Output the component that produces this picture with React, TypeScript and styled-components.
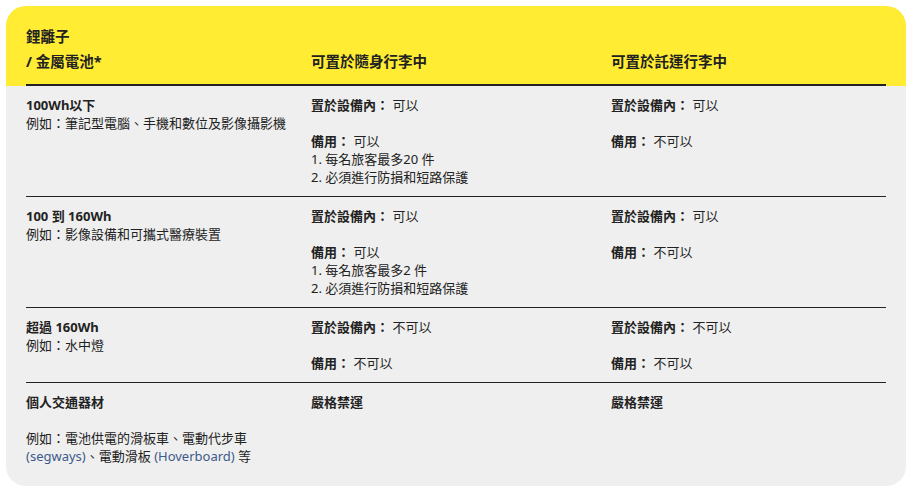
import React from 'react'
import styled, { createGlobalStyle } from 'styled-components'

const GlobalStyle = createGlobalStyle`
  html, body {
    margin: 0;
    padding: 0;
    background: #ffffff;
  }
  body {
    font-family: "Noto Sans", "Noto Sans CJK TC", sans-serif;
    color: #222222;
  }
`

const Page = styled.div`
  padding: 6px 7px 11px 6px;
`

const Card = styled.div`
  background: #efefef;
  border-radius: 20px;
  overflow: hidden;
`

const Header = styled.div`
  background: #ffec33;
  padding: 18px 20px 0 20px;
`

const HeaderGrid = styled.div`
  display: grid;
  grid-template-columns: 285px 300px 1fr;
  align-items: end;
  border-bottom: 2px solid #222222;
  padding-bottom: 10px;
`

const HeadCell = styled.div`
  font-size: 14.5px;
  font-weight: 700;
  line-height: 25px;
`

const Body = styled.div`
  padding: 0 20px 21px 20px;
`

const Row = styled.div<{ $last?: boolean }>`
  display: grid;
  grid-template-columns: 285px 300px 1fr;
  padding: 10px 0 ${p => (p.$last ? '0' : '10px')} 0;
  border-bottom: ${p => (p.$last ? 'none' : '1px solid #222222')};
`

const Cell = styled.div`
  font-size: 13px;
  line-height: 18px;
`

const Para = styled.p`
  margin: 0 0 18px 0;
  &:last-child {
    margin-bottom: 0;
  }
`

const Strong = styled.span`
  font-weight: 700;
`

const Latin = styled.span`
  color: #3d5a8a;
`

type Status = { label: string; value?: string; notes?: string[] }

const StatusBlock = ({ items }: { items: Status[] }) => (
  <Cell>
    {items.map((it, i) => (
      <Para key={i}>
        <Strong>{it.label}</Strong>
        {it.value ? ` ${it.value}` : ''}
        {it.notes?.map((n, j) => (
          <React.Fragment key={j}>
            <br />
            {n}
          </React.Fragment>
        ))}
      </Para>
    ))}
  </Cell>
)

export default function App() {
  return (
    <>
      <GlobalStyle />
      <Page>
        <Card>
          <Header>
            <HeaderGrid>
              <HeadCell>
                鋰離子
                <br />/ 金屬電池*
              </HeadCell>
              <HeadCell>可置於隨身行李中</HeadCell>
              <HeadCell>可置於託運行李中</HeadCell>
            </HeaderGrid>
          </Header>
          <Body>
            <Row>
              <Cell>
                <Strong>100Wh以下</Strong>
                <br />
                例如：筆記型電腦、手機和數位及影像攝影機
              </Cell>
              <StatusBlock
                items={[
                  { label: '置於設備內：', value: '可以' },
                  {
                    label: '備用：',
                    value: '可以',
                    notes: ['1. 每名旅客最多20 件', '2. 必須進行防損和短路保護'],
                  },
                ]}
              />
              <StatusBlock
                items={[
                  { label: '置於設備內：', value: '可以' },
                  { label: '備用：', value: '不可以' },
                ]}
              />
            </Row>
            <Row>
              <Cell>
                <Strong>100 到 160Wh</Strong>
                <br />
                例如：影像設備和可攜式醫療裝置
              </Cell>
              <StatusBlock
                items={[
                  { label: '置於設備內：', value: '可以' },
                  {
                    label: '備用：',
                    value: '可以',
                    notes: ['1. 每名旅客最多2 件', '2. 必須進行防損和短路保護'],
                  },
                ]}
              />
              <StatusBlock
                items={[
                  { label: '置於設備內：', value: '可以' },
                  { label: '備用：', value: '不可以' },
                ]}
              />
            </Row>
            <Row>
              <Cell>
                <Strong>超過 160Wh</Strong>
                <br />
                例如：水中燈
              </Cell>
              <StatusBlock
                items={[
                  { label: '置於設備內：', value: '不可以' },
                  { label: '備用：', value: '不可以' },
                ]}
              />
              <StatusBlock
                items={[
                  { label: '置於設備內：', value: '不可以' },
                  { label: '備用：', value: '不可以' },
                ]}
              />
            </Row>
            <Row $last>
              <Cell>
                <Para>
                  <Strong>個人交通器材</Strong>
                </Para>
                <Para>
                  例如：電池供電的滑板車、電動代步車
                  <br />
                  <Latin>(segways)</Latin>、電動滑板 <Latin>(Hoverboard)</Latin> 等
                </Para>
              </Cell>
              <StatusBlock items={[{ label: '嚴格禁運' }]} />
              <StatusBlock items={[{ label: '嚴格禁運' }]} />
            </Row>
          </Body>
        </Card>
      </Page>
    </>
  )
}
